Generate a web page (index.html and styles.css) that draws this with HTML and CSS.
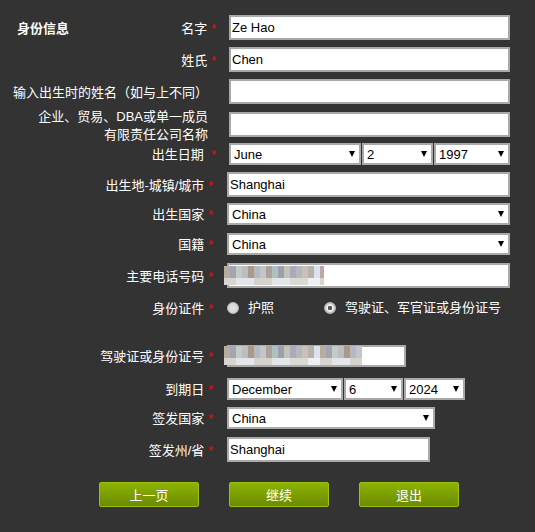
FILE: index.html
```html
<!DOCTYPE html>
<html lang="zh">
<head>
    <meta charset="UTF-8">
    <meta name="viewport" content="width=device-width, initial-scale=1.0">
    <title>身份信息</title>
    <link rel="stylesheet" href="styles.css">
</head>
<body>
<form class="form">
    <div class="group-name">
        <div class="row first">
            <label class="label"><span class="section-title">身份信息</span><span>名字 <em>*</em></span></label>
            <div class="field"><input type="text" class="text" value="Ze Hao"></div>
        </div>
        <div class="row">
            <label class="label">姓氏 <em>*</em></label>
            <div class="field"><input type="text" class="text" value="Chen"></div>
        </div>
        <div class="row">
            <label class="label plain">输入出生时的姓名（如与上不同）</label>
            <div class="field"><input type="text" class="text" value=""></div>
        </div>
        <div class="row company-row">
            <label class="label plain">企业、贸易、DBA或单一成员<br>有限责任公司名称</label>
            <div class="field"><input type="text" class="text" value=""></div>
        </div>
        <div class="row short birth-row">
            <label class="label">出生日期 &nbsp;<em>*</em></label>
            <div class="field dates">
                <span class="select month"><select><option>June</option></select></span>
                <span class="select day"><select><option>2</option></select></span>
                <span class="select year"><select><option>1997</option></select></span>
            </div>
        </div>
    </div>

    <div class="group-more">
        <div class="row">
            <label class="label">出生地-城镇/城市 <em>*</em></label>
            <div class="field"><input type="text" class="text" value="Shanghai"></div>
        </div>
        <div class="row short country-row">
            <label class="label">出生国家 <em>*</em></label>
            <div class="field"><span class="select full"><select><option>China</option></select></span></div>
        </div>
        <div class="row short nation-row">
            <label class="label">国籍 <em>*</em></label>
            <div class="field"><span class="select full"><select><option>China</option></select></span></div>
        </div>
        <div class="row phone-row">
            <label class="label">主要电话号码 <em>*</em></label>
            <div class="field">
                <input type="text" class="text" value="">
                <span class="mosaic phone"></span>
            </div>
        </div>
        <div class="row radios">
            <label class="label">身份证件 <em>*</em></label>
            <div class="field options">
                <span class="option passport"><span class="radio"></span>护照</span>
                <span class="option"><span class="radio checked"></span>驾驶证、军官证或身份证号</span>
            </div>
        </div>
        <div class="row short id-row">
            <label class="label">驾驶证或身份证号 <em>*</em></label>
            <div class="field">
                <input type="text" class="text id-number" value="">
                <span class="mosaic id"></span>
            </div>
        </div>
        <div class="row short expire-row">
            <label class="label">到期日 <em>*</em></label>
            <div class="field dates">
                <span class="select month-sm"><select><option>December</option></select></span>
                <span class="select day-sm"><select><option>6</option></select></span>
                <span class="select year-sm"><select><option>2024</option></select></span>
            </div>
        </div>
        <div class="row short">
            <label class="label">签发国家 <em>*</em></label>
            <div class="field"><span class="select country"><select><option>China</option></select></span></div>
        </div>
        <div class="row state-row">
            <label class="label">签发州/省 <em>*</em></label>
            <div class="field"><input type="text" class="text state" value="Shanghai"></div>
        </div>
    </div>

    <div class="buttons">
        <button type="button" class="btn">上一页</button>
        <button type="button" class="btn">继续</button>
        <button type="button" class="btn">退出</button>
    </div>
</form>
</body>
</html>
```

FILE: styles.css
```css
* {
    box-sizing: border-box;
    margin: 0;
    padding: 0;
}

body {
    background-color: #333333;
    color: #ffffff;
    font-family: "Liberation Sans", "Noto Sans CJK SC", sans-serif;
    font-size: 13px;
}

.form {
    display: flex;
    flex-direction: column;
    gap: 7px;
    padding: 15px 25px 0 0;
}

.group-name,
.group-more {
    display: flex;
    flex-direction: column;
    gap: 7px;
}

.row {
    display: grid;
    grid-template-columns: 213px 1fr;
    grid-template-rows: 100%;
    column-gap: 14px;
    align-items: center;
    height: 25px;
}

.group-name .row {
    grid-template-columns: 216px 1fr;
    column-gap: 13px;
}

.row.short {
    height: 22px;
}

.label {
    text-align: right;
    line-height: 18px;
    white-space: nowrap;
    padding-top: 2px;
}

.label em {
    color: #ff0000;
    font-style: normal;
}

.label.plain {
    padding-right: 8px;
}

.first .label {
    display: flex;
    justify-content: space-between;
    padding-left: 17px;
}

.section-title {
    font-weight: bold;
}

.company-row {
    margin-top: 1px;
}

.company-row .label {
    padding-top: 3px;
}

.birth-row {
    margin-top: -1px;
}

.country-row {
    margin-top: -1px;
}

.nation-row {
    margin-top: 1px;
}

.field {
    position: relative;
    display: flex;
    align-items: center;
}

.text {
    width: 100%;
    height: 25px;
    border: 2px solid #a9a9a9;
    background: #ffffff;
    padding: 0 1px;
    font-family: "Liberation Sans", sans-serif;
    font-size: 13px;
    color: #000000;
    outline: none;
}

.text.id-number {
    width: 179px;
    height: 22px;
}

.text.state {
    width: 203px;
}

/* selects */
.select {
    position: relative;
    display: inline-block;
    height: 22px;
}

.select select {
    appearance: none;
    -webkit-appearance: none;
    width: 100%;
    height: 22px;
    border: 2px solid #a9a9a9;
    border-radius: 0;
    background: #ffffff;
    padding-left: 3px;
    font-family: "Liberation Sans", sans-serif;
    font-size: 13px;
    color: #000000;
    outline: none;
}

.select::after {
    content: "";
    position: absolute;
    right: 6px;
    top: 8px;
    border-left: 3px solid transparent;
    border-right: 3px solid transparent;
    border-top: 6px solid #000000;
    pointer-events: none;
}

.dates {
    gap: 1px;
}

.select.full { width: 100%; }
.select.month { width: 132px; }
.select.day { width: 71px; }
.select.year { width: 76px; }
.select.month-sm { width: 116px; }
.select.day-sm { width: 59px; }
.select.year-sm { width: 61px; }
.select.country { width: 208px; }

/* blurred values */
.mosaic {
    position: absolute;
    left: -3px;
    height: 19px;
    filter: blur(0.6px);
    background:
        linear-gradient(to right,
            #b9aba1 0 6px, #a2a6b2 6px 12px, #c6cac6 12px 18px, #babebe 18px 24px,
            #a99a8b 24px 30px, #b5b9c1 30px 36px, #c2c6ca 36px 42px, #aba39b 42px 48px,
            #b2bec2 48px 54px, #9aa2aa 54px 60px, #c6c2ba 60px 66px, #aaaaba 66px 72px,
            #b2baba 72px 78px, #cac2ba 78px 84px, #bab2aa 84px 90px, #dae2f2 90px 96px) top left / 96px 12px repeat-x,
        linear-gradient(to right,
            #d8d4d0 0 12px, #e4e6ea 12px 30px, #d6d2cc 30px 48px, #e2e6e8 48px 66px, #dcd8d4 66px 84px, #eef0f4 84px 96px) bottom left / 96px 7px repeat-x;
}

.mosaic.phone {
    top: 3px;
    width: 100px;
}

.mosaic.id {
    top: 1px;
    width: 138px;
}

.phone-row {
    margin-top: 1px;
}

/* radios */
.radios {
    height: 20px;
    margin-top: 3px;
}

.option {
    display: flex;
    align-items: center;
    gap: 9px;
    line-height: 18px;
}

.option.passport {
    width: 97px;
}

.radio {
    width: 12px;
    height: 12px;
    border-radius: 50%;
    border: 1px solid #b8b8b8;
    background: radial-gradient(circle, #e4e4e4 0, #d0d0d0 100%);
}

.radio.checked {
    background: radial-gradient(circle, #555555 0 2px, #f0f0f0 2.5px 3.5px, #c8c8c8 4px);
}

.id-row {
    margin-top: 20px;
}

.expire-row {
    margin-top: 4px;
}

.state-row {
    margin-top: 1px;
}

/* buttons */
.buttons {
    display: flex;
    gap: 30px;
    padding-left: 99px;
    margin-top: 13px;
}

.btn {
    width: 100px;
    height: 25px;
    border: 1px solid #9cc012;
    border-radius: 2px;
    background: linear-gradient(#8db300, #6b8b00);
    color: #ffffff;
    font-family: "Liberation Sans", "Noto Sans CJK SC", sans-serif;
    font-size: 13px;
    cursor: pointer;
}
```
